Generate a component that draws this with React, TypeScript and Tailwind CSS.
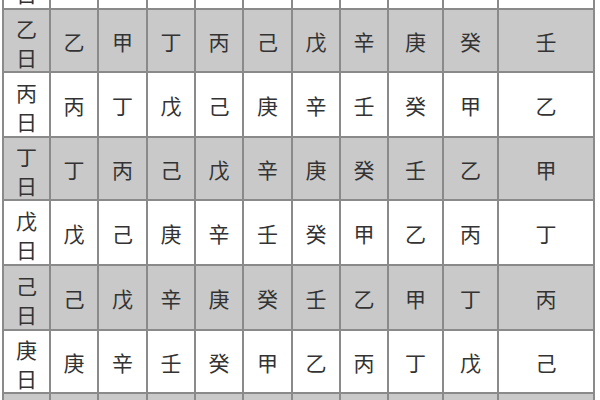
const rows: string[][] = [
  ['甲', '甲', '乙', '丙', '丁', '戊', '己', '庚', '辛', '壬', '癸'],
  ['乙', '乙', '甲', '丁', '丙', '己', '戊', '辛', '庚', '癸', '壬'],
  ['丙', '丙', '丁', '戊', '己', '庚', '辛', '壬', '癸', '甲', '乙'],
  ['丁', '丁', '丙', '己', '戊', '辛', '庚', '癸', '壬', '乙', '甲'],
  ['戊', '戊', '己', '庚', '辛', '壬', '癸', '甲', '乙', '丙', '丁'],
  ['己', '己', '戊', '辛', '庚', '癸', '壬', '乙', '甲', '丁', '丙'],
  ['庚', '庚', '辛', '壬', '癸', '甲', '乙', '丙', '丁', '戊', '己'],
  ['辛', '辛', '庚', '癸', '壬', '乙', '甲', '丁', '丙', '己', '戊'],
]

export default function App() {
  return (
    <div className="w-[600px] h-[400px] overflow-hidden bg-white">
      <div
        className="-mt-[56px] ml-[2px] w-[593px] grid gap-[2px] p-[2px] bg-[#8a8a8a] text-[#333333] text-[21px] font-normal grid-cols-[45px_46px_47px_46px_46px_47px_46px_46px_53px_53px_94px] grid-rows-[62px_61px_63px_61px_63px_63px_61px_62px]"
        style={{ fontFamily: '"Noto Sans CJK SC", "Noto Sans", sans-serif' }}
      >
        {rows.map((row, i) => {
          const bg = i % 2 === 1 ? 'bg-[#c9c9c9]' : 'bg-white'
          return row.map((ch, j) =>
            j === 0 ? (
              <div key={`${i}-${j}`} className={`${bg} flex flex-col items-center justify-center pt-[4px] leading-[29px]`}>
                <span>{ch}</span>
                <span>日</span>
              </div>
            ) : (
              <div key={`${i}-${j}`} className={`${bg} flex items-center justify-center pt-[3px]`}>
                {ch}
              </div>
            )
          )
        })}
      </div>
    </div>
  )
}
